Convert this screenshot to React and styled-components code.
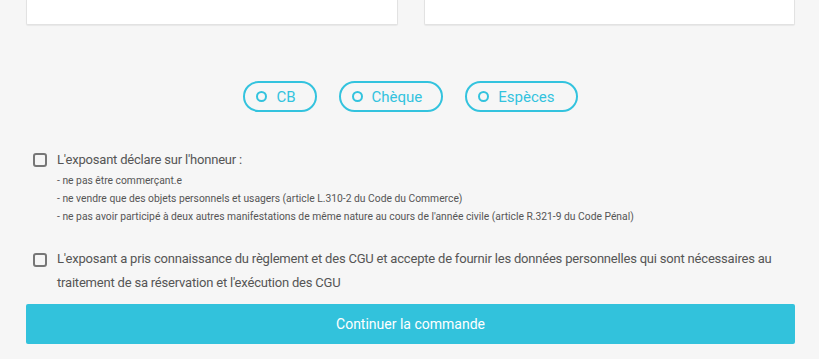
import React from 'react';
import styled, { createGlobalStyle } from 'styled-components';

const GlobalStyle = createGlobalStyle`
  body {
    margin: 0;
    background: #f6f6f6;
    font-family: Roboto, 'Noto Sans', sans-serif;
  }
`;

const Page = styled.div`
  padding: 0 24px 0 26px;
`;

const CardRow = styled.div`
  display: grid;
  grid-template-columns: 1fr 1fr;
  gap: 26px;
`;

const Card = styled.div`
  height: 24px;
  background: #fff;
  border: 1px solid #e2e2e2;
  border-top: none;
  border-radius: 0 0 2px 2px;
  box-shadow: 0 1px 1px rgba(0, 0, 0, 0.06);
`;

const Payments = styled.div`
  display: flex;
  justify-content: center;
  gap: 22px;
  margin-top: 56px;
`;

const Pill = styled.label`
  display: flex;
  align-items: center;
  gap: 9px;
  height: 27px;
  padding: 0 ${(p) => p.$pad}px 0 11px;
  border: 2px solid #33c3de;
  border-radius: 16px;
  color: #33c3de;
  font-size: 15px;
`;

const Dot = styled.span`
  width: 7px;
  height: 7px;
  border: 2.5px solid #33c3de;
  border-radius: 50%;
`;

const Terms = styled.div`
  margin-top: 36px;
  padding-left: 7px;
  display: flex;
  flex-direction: column;
  gap: 21px;
`;

const CheckRow = styled.div`
  display: flex;
  gap: 10px;
  align-items: flex-start;
`;

const Box = styled.span`
  flex: none;
  width: 10px;
  height: 10px;
  margin-top: ${(p) => p.$top}px;
  border: 2.5px solid #777;
  border-radius: 3px;
`;

const Text = styled.div`
  color: #555;
  font-size: 13px;
  letter-spacing: -0.2px;
  line-height: 24px;
`;

const Item = styled.div`
  font-size: 10.3px;
  line-height: 18px;
  color: #555;
`;

const Submit = styled.button`
  display: block;
  width: 100%;
  height: 40px;
  margin-top: 9px;
  border: none;
  border-radius: 2px;
  background: #32c2dc;
  color: #fff;
  font-family: Roboto, sans-serif;
  font-size: 14px;
`;

export default function App() {
  return (
    <Page>
      <GlobalStyle />
      <CardRow>
        <Card />
        <Card />
      </CardRow>
      <Payments>
        <Pill $pad={19}><Dot />CB</Pill>
        <Pill $pad={19}><Dot />Chèque</Pill>
        <Pill $pad={21}><Dot />Espèces</Pill>
      </Payments>
      <Terms>
        <CheckRow>
          <Box $top={5} />
          <div>
            <Text>L'exposant déclare sur l'honneur :</Text>
            <Item>- ne pas être commerçant.e</Item>
            <Item>- ne vendre que des objets personnels et usagers (article L.310-2 du Code du Commerce)</Item>
            <Item>- ne pas avoir participé à deux autres manifestations de même nature au cours de l'année civile (article R.321-9 du Code Pénal)</Item>
          </div>
        </CheckRow>
        <CheckRow>
          <Box $top={6} />
          <Text>
            L'exposant a pris connaissance du règlement et des CGU et accepte de fournir les données personnelles qui sont nécessaires au traitement de sa réservation et l'exécution des CGU
          </Text>
        </CheckRow>
      </Terms>
      <Submit>Continuer la commande</Submit>
    </Page>
  );
}
